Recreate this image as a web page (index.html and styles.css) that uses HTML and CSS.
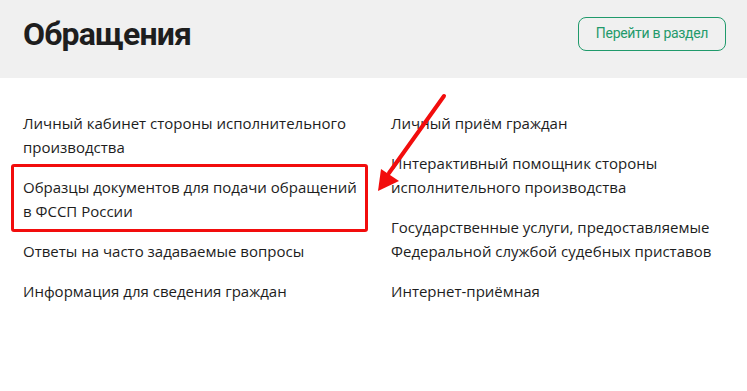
FILE: index.html
```html
<html>
  <head>
    <title>Обращения</title>
    <link rel="stylesheet" href="styles.css">
  </head>
  <body>
    <div class="header">
      <h1>Обращения</h1>
      <a class="go-btn" href="#">Перейти в раздел</a>
    </div>

    <div class="links">
      <div class="column">
        <a class="link" href="#">Личный кабинет стороны исполнительного производства</a>
        <a class="link marked" href="#">Образцы документов для подачи обращений в ФССП России</a>
        <a class="link" href="#">Ответы на часто задаваемые вопросы</a>
        <a class="link" href="#">Информация для сведения граждан</a>
      </div>
      <div class="column">
        <a class="link" href="#">Личный приём граждан</a>
        <a class="link" href="#">Интерактивный помощник стороны исполнительного производства</a>
        <a class="link" href="#">Государственные услуги, предоставляемые Федеральной службой судебных приставов</a>
        <a class="link" href="#">Интернет-приёмная</a>
      </div>
    </div>

    <svg class="arrow" width="80" height="110" viewBox="0 0 80 110">
      <line x1="75" y1="5" x2="20" y2="82" stroke="#f20d0d" stroke-width="4" stroke-linecap="round"/>
      <polygon points="9,100 12,78 30,90" fill="#f20d0d"/>
    </svg>
  </body>
</html>
```

FILE: styles.css
```css
body {
    margin: 0;
    font-family: "Open Sans", Arial, sans-serif;
    background: #fff;
    color: #1d1d1d;
    position: relative;
}

.header {
    background-color: #f0f0f0;
    height: 78px;
    display: flex;
    align-items: center;
    justify-content: space-between;
    padding: 0 21px 10px 23px;
    box-sizing: border-box;
}

h1 {
    margin: 0;
    font-family: Roboto, Arial, sans-serif;
    font-size: 32px;
    font-weight: 700;
    color: #1e1e1e;
    letter-spacing: -0.8px;
}

.go-btn {
    display: block;
    width: 148px;
    height: 34px;
    box-sizing: border-box;
    border: 1.5px solid #1f9a6b;
    border-radius: 8px;
    color: #1f9a6b;
    text-decoration: none;
    font-family: Roboto, Arial, sans-serif;
    font-size: 14px;
    line-height: 31px;
    text-align: center;
    letter-spacing: -0.3px;
}

.links {
    display: flex;
    padding: 33px 23px 0 23px;
}

.column {
    display: flex;
    flex-direction: column;
    gap: 16px;
}

.column:first-child {
    width: 338px;
    margin-right: 30px;
}

.column:last-child {
    width: 333px;
}

.link {
    color: #1d1d1d;
    text-decoration: none;
    font-size: 15px;
    line-height: 24px;
    position: relative;
}

.marked::before {
    content: "";
    position: absolute;
    left: -12px;
    top: -11px;
    width: 351px;
    height: 62px;
    border: 3px solid #f20d0d;
    border-radius: 3px;
}

.arrow {
    position: absolute;
    left: 369px;
    top: 91px;
}
```
